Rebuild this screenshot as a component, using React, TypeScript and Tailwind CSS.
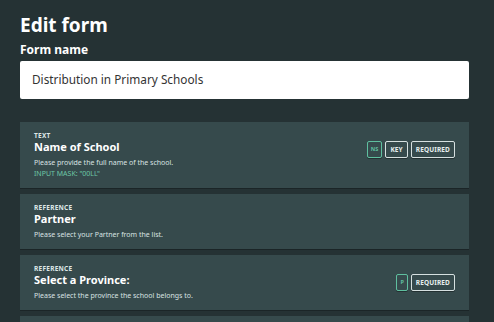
const FIELDS = [
  {
    type: "Text",
    label: "Name of School",
    help: "Please provide the full name of the school.",
    mask: '"00LL"',
    tag: "NS",
    key: true,
    required: true,
  },
  {
    type: "Reference",
    label: "Partner",
    help: "Please select your Partner from the list.",
  },
  {
    type: "Reference",
    label: "Select a Province:",
    help: "Please select the province the school belongs to.",
    tag: "P",
    required: true,
  },
];

function Badge({ children, green }: { children: React.ReactNode; green?: boolean }) {
  return (
    <span
      className={`flex h-[17px] items-center rounded-[2px] border font-bold uppercase shadow-[0_1px_0_rgba(0,0,0,0.35)] ${
        green
          ? "border-[#5fbf9f] px-[3px] text-[5.5px] text-[#5fbf9f]"
          : "border-[#d6e0e0] px-[4px] text-[6.5px] tracking-[0.02em] text-[#e6eeee]"
      }`}
    >
      {children}
    </span>
  );
}

export default function App() {
  return (
    <div className="h-[322px] overflow-hidden bg-[#253234] px-5 pt-[12px] font-['Noto_Sans',sans-serif] text-white">
      <h1 className="text-[19px] font-bold leading-[26px]">Edit form</h1>
      <label className="mt-[4px] block text-[12px] font-bold leading-[16px]">Form name</label>
      <div className="mt-[3px] flex h-[38px] w-[449px] items-center rounded-[2px] bg-white px-3 text-[11.8px] text-[#333]">
        Distribution in Primary Schools
      </div>

      <div className="mt-[23px] flex w-[449px] flex-col gap-[6px]">
        {FIELDS.map((f) => (
          <div
            key={f.label}
            className="flex items-start justify-between bg-[#364a4c] px-[14px] pb-[9px] pt-[9px] shadow-[0_1px_0_rgba(0,0,0,0.25)]"
          >
            <div>
              <div className="text-[6.5px] font-bold uppercase leading-[9px] tracking-[0.04em] text-[#dfe8e8]">
                {f.type}
              </div>
              <div className="text-[11px] font-bold leading-[14px]">{f.label}</div>
              <div className="mt-[4px] text-[7px] leading-[10px] text-[#d8e2e2]">{f.help}</div>
              {f.mask && (
                <div className="mt-[1px] text-[7px] uppercase leading-[10px] text-[#6cc7a6]">
                  Input mask: {f.mask}
                </div>
              )}
            </div>
            {(f.tag || f.required) && (
              <div className="mt-[10px] flex gap-[3px]">
                {f.tag && <Badge green>{f.tag}</Badge>}
                {f.key && <Badge>Key</Badge>}
                {f.required && <Badge>Required</Badge>}
              </div>
            )}
          </div>
        ))}
        {/* next field, scrolled below the fold */}
        <div className="h-[55px] bg-[#364a4c]" />
      </div>
    </div>
  );
}
